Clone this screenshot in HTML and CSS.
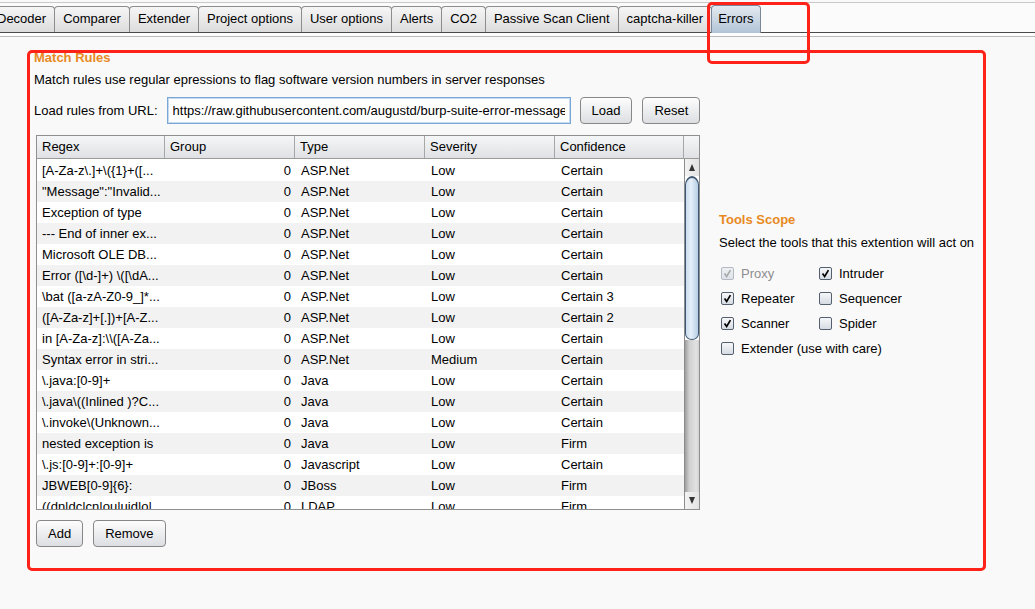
FILE: index.html
```html
<!DOCTYPE html>
<html>
<head>
<meta charset="utf-8">
<link rel="stylesheet" href="styles.css">
</head>
<body>
<div class="tabstrip">
  <div class="tab first">Decoder</div>
  <div class="tab">Comparer</div>
  <div class="tab">Extender</div>
  <div class="tab">Project options</div>
  <div class="tab">User options</div>
  <div class="tab">Alerts</div>
  <div class="tab">CO2</div>
  <div class="tab">Passive Scan Client</div>
  <div class="tab">captcha-killer</div>
  <div class="tab active">Errors</div>
</div>
<div class="strip-gap"></div>
<div class="panel">
  <div class="left">
    <div class="section-title">Match Rules</div>
    <div class="desc">Match rules use regular epressions to flag software version numbers in server responses</div>
    <div class="url-row">
      <span class="url-label">Load rules from URL:</span>
      <input class="url-input" type="text" value="https://raw.githubusercontent.com/augustd/burp-suite-error-message-checks/master/src/main/resources/burp/match-rules.tab">
      <button class="btn">Load</button>
      <button class="btn">Reset</button>
    </div>
    <div class="table">
      <div class="thead">
        <div class="th">Regex</div>
        <div class="th">Group</div>
        <div class="th">Type</div>
        <div class="th">Severity</div>
        <div class="th">Confidence</div>
        <div class="th corner"></div>
      </div>
      <div class="tbody">
        <div class="rows">
          <div class="tr"><div class="td">[A-Za-z\.]+\({1}+([...</div><div class="td num">0</div><div class="td">ASP.Net</div><div class="td">Low</div><div class="td">Certain</div></div>
          <div class="tr"><div class="td">"Message":"Invalid...</div><div class="td num">0</div><div class="td">ASP.Net</div><div class="td">Low</div><div class="td">Certain</div></div>
          <div class="tr"><div class="td">Exception of type</div><div class="td num">0</div><div class="td">ASP.Net</div><div class="td">Low</div><div class="td">Certain</div></div>
          <div class="tr"><div class="td">--- End of inner ex...</div><div class="td num">0</div><div class="td">ASP.Net</div><div class="td">Low</div><div class="td">Certain</div></div>
          <div class="tr"><div class="td">Microsoft OLE DB...</div><div class="td num">0</div><div class="td">ASP.Net</div><div class="td">Low</div><div class="td">Certain</div></div>
          <div class="tr"><div class="td">Error ([\d-]+) \([\dA...</div><div class="td num">0</div><div class="td">ASP.Net</div><div class="td">Low</div><div class="td">Certain</div></div>
          <div class="tr"><div class="td">\bat ([a-zA-Z0-9_]*...</div><div class="td num">0</div><div class="td">ASP.Net</div><div class="td">Low</div><div class="td">Certain 3</div></div>
          <div class="tr"><div class="td">([A-Za-z]+[.])+[A-Z...</div><div class="td num">0</div><div class="td">ASP.Net</div><div class="td">Low</div><div class="td">Certain 2</div></div>
          <div class="tr"><div class="td">in [A-Za-z]:\\([A-Za...</div><div class="td num">0</div><div class="td">ASP.Net</div><div class="td">Low</div><div class="td">Certain</div></div>
          <div class="tr"><div class="td">Syntax error in stri...</div><div class="td num">0</div><div class="td">ASP.Net</div><div class="td">Medium</div><div class="td">Certain</div></div>
          <div class="tr"><div class="td">\.java:[0-9]+</div><div class="td num">0</div><div class="td">Java</div><div class="td">Low</div><div class="td">Certain</div></div>
          <div class="tr"><div class="td">\.java\((Inlined )?C...</div><div class="td num">0</div><div class="td">Java</div><div class="td">Low</div><div class="td">Certain</div></div>
          <div class="tr"><div class="td">\.invoke\(Unknown...</div><div class="td num">0</div><div class="td">Java</div><div class="td">Low</div><div class="td">Certain</div></div>
          <div class="tr"><div class="td">nested exception is</div><div class="td num">0</div><div class="td">Java</div><div class="td">Low</div><div class="td">Firm</div></div>
          <div class="tr"><div class="td">\.js:[0-9]+:[0-9]+</div><div class="td num">0</div><div class="td">Javascript</div><div class="td">Low</div><div class="td">Certain</div></div>
          <div class="tr"><div class="td">JBWEB[0-9]{6}:</div><div class="td num">0</div><div class="td">JBoss</div><div class="td">Low</div><div class="td">Firm</div></div>
          <div class="tr"><div class="td">((dn|dc|cn|ou|uid|o|...</div><div class="td num">0</div><div class="td">LDAP</div><div class="td">Low</div><div class="td">Firm</div></div>
        </div>
        <div class="scrollbar">
          <div class="sb-btn"><span class="tri-up"></span></div>
          <div class="sb-thumb"></div>
          <div class="sb-track"></div>
          <div class="sb-btn"><span class="tri-down"></span></div>
        </div>
      </div>
    </div>
    <div class="btn-row">
      <button class="btn">Add</button>
      <button class="btn">Remove</button>
    </div>
  </div>
  <div class="right">
    <div class="section-title">Tools Scope</div>
    <div class="desc desc-right">Select the tools that this extention will act on</div>
    <div class="checks">
      <label class="chk disabled"><span class="box checked"><svg viewBox="0 0 13 13"><path d="M3 6.5 L5.5 10 L10 2.5"/></svg></span>Proxy</label>
      <label class="chk"><span class="box checked"><svg viewBox="0 0 13 13"><path d="M3 6.5 L5.5 10 L10 2.5"/></svg></span>Intruder</label>
      <label class="chk"><span class="box checked"><svg viewBox="0 0 13 13"><path d="M3 6.5 L5.5 10 L10 2.5"/></svg></span>Repeater</label>
      <label class="chk"><span class="box"></span>Sequencer</label>
      <label class="chk"><span class="box checked"><svg viewBox="0 0 13 13"><path d="M3 6.5 L5.5 10 L10 2.5"/></svg></span>Scanner</label>
      <label class="chk"><span class="box"></span>Spider</label>
      <label class="chk wide"><span class="box"></span>Extender (use with care)</label>
    </div>
  </div>
</div>
<div class="annot annot-tab"></div>
<div class="annot annot-main"></div>
</body>
</html>
```

FILE: styles.css
```css
* { box-sizing: border-box; }
html, body { margin: 0; padding: 0; }
body {
  width: 1035px;
  height: 609px;
  overflow: hidden;
  position: relative;
  background: #f9f9f9;
  font-family: "Liberation Sans", Arial, sans-serif;
  font-size: 13px;
  line-height: 16px;
  color: #000;
}

/* ---------- tabs ---------- */
.tabstrip {
  margin-top: 2px;
  height: 31px;
  display: flex;
  align-items: flex-end;
  border-top: 1px solid #c9c9c9;
  border-bottom: 1px solid #4a4a4a;
  background: #fbfbfb;
  white-space: nowrap;
}
.tab {
  height: 26px;
  line-height: 24px;
  padding: 0 8px;
  border: 1px solid #8d8d8d;
  border-bottom: none;
  border-radius: 4px 4px 0 0;
  margin-left: -1px;
  background: linear-gradient(#f6f6f6, #dcdcdc);
  color: #000;
  flex: none;
}
.tab.first { margin-left: -13px; padding-left: 9px; }
.tab.active {
  height: 28px;
  line-height: 26px;
  padding: 0 6px;
  margin-bottom: -1px;
  background: linear-gradient(#e3e9f0, #b1c4d7);
  border-color: #7b8794;
  position: relative;
}
.strip-gap {
  height: 4px;
  background: #fdfdfd;
  border-bottom: 1px solid #b9b9b9;
}

/* ---------- panel ---------- */
.panel {
  display: flex;
  padding: 13px 0 0 34px;
}
.left { width: 666px; flex: none; }
.right { margin-left: 19px; margin-top: 162px; white-space: nowrap; }

.section-title {
  color: #e8891f;
  font-weight: bold;
  height: 16px;
}
.desc { margin-top: 6px; }
.desc-right { margin-top: 7px; }

.url-row {
  margin-top: 9px;
  display: flex;
  align-items: center;
  height: 27px;
}
.url-label { margin-right: 9px; white-space: nowrap; flex: none; }
.url-input {
  width: 404px;
  height: 27px;
  flex: none;
  border: 1px solid #7aa7d6;
  box-shadow: inset 0 0 0 1px #c3daf1;
  padding: 0 5px;
  font-family: "Liberation Sans", Arial, sans-serif;
  font-size: 13px;
  color: #000;
  background: #fff;
  outline: none;
}
.btn {
  height: 27px;
  padding: 0 11px;
  border: 1px solid #878787;
  border-radius: 4px;
  background: linear-gradient(#fdfdfd, #dcdee2);
  font-family: "Liberation Sans", Arial, sans-serif;
  font-size: 13px;
  color: #000;
  margin-left: 10px;
  flex: none;
}
.url-input + .btn { margin-left: 9px; }

/* ---------- table ---------- */
.table {
  margin-top: 11px;
  margin-left: 2px;
  width: 664px;
  border: 1px solid #8f8f8f;
  background: #fff;
}
.thead {
  display: grid;
  grid-template-columns: 128px 130px 130px 130px 129px 15px;
  height: 23px;
  border-bottom: 1px solid #9a9a9a;
  background: linear-gradient(#f5f6f7, #dfe1e4);
}
.th {
  line-height: 22px;
  padding-left: 5px;
  border-right: 1px solid #a7a7a7;
}
.th.corner { border-right: none; }
.tbody {
  display: flex;
  height: 350px;
  overflow: hidden;
}
.rows { width: 647px; padding-top: 1px; }
.tr {
  display: grid;
  grid-template-columns: 128px 130px 130px 130px 129px;
  height: 21px;
  line-height: 21px;
  background: #fff;
}
.tr:nth-child(even) { background: #f2f2f2; }
.td { padding-left: 5px; white-space: nowrap; overflow: hidden; }
.td:nth-child(3), .td:nth-child(4), .td:nth-child(5) { padding-left: 6px; }
.td.num { text-align: right; padding-left: 0; padding-right: 4px; }

.scrollbar {
  width: 15px;
  display: flex;
  flex-direction: column;
  border-left: 1px solid #8c8c8c;
  background: #fff;
}
.sb-btn {
  height: 17px;
  display: flex;
  align-items: center;
  justify-content: center;
  flex: none;
  background: linear-gradient(90deg, #f3f3f3, #e2e2e2);
}
.tri-up, .tri-down {
  width: 0; height: 0;
  border-left: 3.5px solid transparent;
  border-right: 3.5px solid transparent;
}
.tri-up { border-bottom: 7px solid #333; }
.tri-down { border-top: 7px solid #333; }
.sb-thumb {
  height: 164px;
  flex: none;
  border: 1px solid #3f5670;
  border-top-width: 2px;
  border-radius: 9px 9px 9px 9px / 12px 12px 8px 8px;
  background: linear-gradient(90deg, #c9dcee, #e6f0f9 40%, #b7cfe6);
}
.sb-track {
  flex: 1;
  background: linear-gradient(90deg, #9d9d9d, #cfcfcf 30%, #e2e2e2 80%, #d0d0d0);
}

.btn-row {
  margin-top: 10px;
  margin-left: 2px;
  display: flex;
}
.btn-row .btn:first-child { margin-left: 0; }

/* ---------- checkboxes ---------- */
.checks {
  margin-top: 10px;
  display: grid;
  grid-template-columns: 98px auto;
  grid-auto-rows: 25px;
}
.chk {
  display: flex;
  align-items: center;
  padding-left: 2px;
}
.chk.wide { grid-column: 1 / 3; }
.box {
  width: 13px;
  height: 13px;
  margin-right: 7px;
  border: 1px solid #55606e;
  border-radius: 2px;
  background: linear-gradient(#f6f7f9, #d6dce3);
  flex: none;
  display: flex;
}
.box svg { width: 11px; height: 11px; }
.box path { fill: none; stroke: #000; stroke-width: 2; }
.chk.disabled { color: #8e8e8e; }
.chk.disabled .box { border-color: #b3bac4; background: linear-gradient(#eef0f2, #dfe3e8); }
.chk.disabled .box path { stroke: #a9abae; }

/* ---------- annotations ---------- */
.annot {
  position: absolute;
  border: 3px solid #ff2218;
  border-radius: 5px;
  pointer-events: none;
}
.annot-tab { left: 707px; top: 2px; width: 103px; height: 62px; }
.annot-main { left: 27px; top: 50px; width: 959px; height: 521px; }
```
